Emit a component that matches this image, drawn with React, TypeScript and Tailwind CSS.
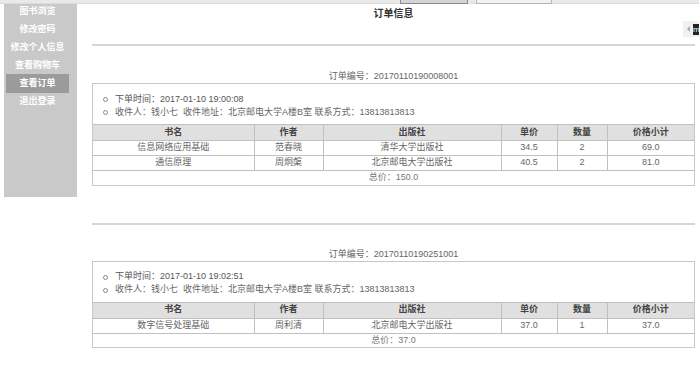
import React from "react";

type Item = { name: string; author: string; pub: string; price: string; qty: string; sub: string };
type Order = { no: string; time: string; items: Item[]; total: string };

const orders: Order[] = [
  {
    no: "20170110190008001",
    time: "2017-01-10 19:00:08",
    items: [
      { name: "信息网络应用基础", author: "范春晓", pub: "清华大学出版社", price: "34.5", qty: "2", sub: "69.0" },
      { name: "通信原理", author: "周炯槃", pub: "北京邮电大学出版社", price: "40.5", qty: "2", sub: "81.0" },
    ],
    total: "150.0",
  },
  {
    no: "20170110190251001",
    time: "2017-01-10 19:02:51",
    items: [
      { name: "数字信号处理基础", author: "周利清", pub: "北京邮电大学出版社", price: "37.0", qty: "1", sub: "37.0" },
    ],
    total: "37.0",
  },
];

const menu = ["图书浏览", "修改密码", "修改个人信息", "查看购物车", "查看订单", "退出登录"];

function OrderBlock({ o }: { o: Order }) {
  return (
    <div>
      <div className="h-[14px] leading-[14px] text-center text-[#666]">订单编号：{o.no}</div>
      <div className="border border-[#c8c8c8]">
        <ul className="pt-[9px] mb-[5px]">
          <li className="flex items-center h-[13px] pl-[10px]">
            <span className="w-[5px] h-[5px] rounded-full border border-[#888] mr-[7px]" />
            <span className="text-[#555]">下单时间：{o.time}</span>
          </li>
          <li className="flex items-center h-[13px] pl-[10px]">
            <span className="w-[5px] h-[5px] rounded-full border border-[#888] mr-[7px]" />
            <span className="text-[#666] whitespace-pre">收件人：钱小七  收件地址：北京邮电大学A楼B室 联系方式：13813813813</span>
          </li>
        </ul>
        <table className="w-full table-fixed border-collapse text-center">
          <colgroup>
            <col className="w-[161px]" />
            <col className="w-[69px]" />
            <col className="w-[178px]" />
            <col className="w-[56px]" />
            <col className="w-[50px]" />
            <col />
          </colgroup>
          <thead>
            <tr className="h-[16px] bg-[#e0e0e0] text-[#444]">
              {["书名", "作者", "出版社", "单价", "数量", "价格小计"].map((h, i) => (
                <th
                  key={h}
                  className={`border-t border-b border-[#c0c0c0] p-0 font-semibold ${i > 0 ? "border-l" : ""}`}
                >
                  {h}
                </th>
              ))}
            </tr>
          </thead>
          <tbody className="text-[#666]">
            {o.items.map((it) => (
              <tr key={it.name} className="h-[15px]">
                <td className="border-b border-[#c0c0c0] p-0">{it.name}</td>
                <td className="border-b border-l border-[#c0c0c0] p-0">{it.author}</td>
                <td className="border-b border-l border-[#c0c0c0] p-0">{it.pub}</td>
                <td className="border-b border-l border-[#c0c0c0] p-0">{it.price}</td>
                <td className="border-b border-l border-[#c0c0c0] p-0">{it.qty}</td>
                <td className="border-b border-l border-[#c0c0c0] p-0">{it.sub}</td>
              </tr>
            ))}
            <tr className="h-[14px]">
              <td colSpan={6} className="p-0 text-[#777]">总价：{o.total}</td>
            </tr>
          </tbody>
        </table>
      </div>
    </div>
  );
}

export default function App() {
  return (
    <div
      className="relative w-[699px] h-[366px] overflow-hidden bg-white text-[9px]"
      style={{ fontFamily: '"Liberation Sans", "Noto Sans CJK SC", sans-serif' }}
    >
      <div className="absolute left-0 top-0 w-full h-[4px] bg-[#e9e9e9] border-b border-[#dcdcdc]">
        <div className="absolute left-[400px] top-0 w-[68px] h-[4px] bg-[#d4d4d4] border-x border-b border-[#8a8a8a]" />
        <div className="absolute left-[476px] top-0 w-[76px] h-[4px] bg-[#f2f2f2] border-x border-b border-[#b5b5b5]" />
      </div>

      <div className="flex">
        <div className="ml-[4px] w-[73px] h-[197px] bg-[#c9c9c9] pt-[2px]">
          {menu.map((m) => (
            <div
              key={m}
              className={`h-[18px] leading-[18px] text-center font-semibold text-white ${
                m === "查看订单" ? "bg-[#9b9b9b] ml-[2px] mr-[8px] h-[19px] leading-[19px] -mb-[1px]" : "mr-[6px]"
              }`}
            >
              {m}
            </div>
          ))}
        </div>

        <div className="ml-[15px] w-[603px]">
          <div className="h-[28px] leading-[28px] text-center font-semibold text-[10px] text-[#333]">订单信息</div>
          <div className="mt-[16px] border-t-2 border-[#d6d6d6]" />
          <div className="mt-[23px]">
            <OrderBlock o={orders[0]} />
          </div>
          <div className="mt-[37px] border-t-2 border-[#d6d6d6]" />
          <div className="mt-[22px]">
            <OrderBlock o={orders[1]} />
          </div>
        </div>
      </div>

      <div className="absolute left-[683px] top-[21px] w-[16px] h-[16px] bg-[#f0f0f0] flex items-center">
        <span className="ml-[4px] w-0 h-0 border-y-[3px] border-y-transparent border-r-[3px] border-r-[#aaa]" />
        <span className="ml-[3px] w-[7px] h-[11px] bg-[#222] text-white text-[8px] leading-[11px] overflow-hidden">m</span>
      </div>
    </div>
  );
}
